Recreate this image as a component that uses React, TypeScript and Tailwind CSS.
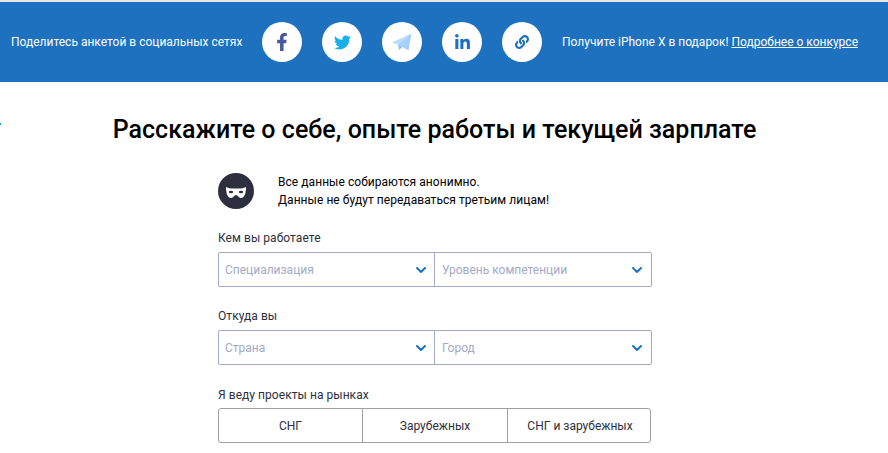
import { FaFacebookF, FaTwitter, FaLinkedinIn, FaLink } from 'react-icons/fa'
import { ChevronDown } from 'lucide-react'

function SocialCircle({ children }: { children: React.ReactNode }) {
    return (
        <a className="flex h-10 w-10 shrink-0 items-center justify-center rounded-full bg-white">
            {children}
        </a>
    )
}

function TelegramIcon() {
    return (
        <svg width="20" height="18" viewBox="0 0 20 18">
            <path d="M0 9.5 19.5 0.5 6 11.5Z" fill="#bcdcfb" />
            <path d="M6 11.5 19.5 0.5 16.5 17.5Z" fill="#a5d0fa" />
            <path d="M6 11.5 7 17 10.5 14Z" fill="#8fc2f5" />
        </svg>
    )
}

function MaskIcon() {
    return (
        <svg width="36" height="36" viewBox="0 0 36 36" className="shrink-0">
            <circle cx="18" cy="18" r="18" fill="#2d2f3e" />
            <path
                d="M8 14C12 16 14.5 15.5 18 15.5S24 16 28 14C28 19 27 25 23 25C20.5 25 20 22 18 22S15.5 25 13 25C9 25 8 19 8 14Z"
                fill="#fff"
            />
            <ellipse cx="13" cy="19" rx="2.2" ry="1.2" fill="#2d2f3e" />
            <ellipse cx="23" cy="19" rx="2.2" ry="1.2" fill="#2d2f3e" />
        </svg>
    )
}

function SelectBox({ placeholder, className }: { placeholder: string; className: string }) {
    return (
        <div className={`flex h-[35px] items-center justify-between border border-[#a3aac6] ${className}`}>
            <span className="text-[12px] text-[#a3aac6]">{placeholder}</span>
            <ChevronDown size={16} strokeWidth={3} className="text-[#1d71bf]" />
        </div>
    )
}

function SelectRow({ label, left, right }: { label: string; left: string; right: string }) {
    return (
        <div>
            <div className="mb-[6px] text-[12px] leading-[16px] tracking-[0.05px] text-[#2d2f3e]">{label}</div>
            <div className="flex">
                <SelectBox placeholder={left} className="w-[217px] rounded-l-[2px] pl-[6px] pr-[5px]" />
                <SelectBox placeholder={right} className="-ml-px w-[218px] rounded-r-[2px] pl-[7px] pr-[6px]" />
            </div>
        </div>
    )
}

export default function App() {
    return (
        <div className="relative h-[453px] w-[888px] overflow-hidden bg-white font-['Roboto',sans-serif]">
            <div className="h-[2px] bg-[#e4e7ea]" />
            <div className="flex h-[80px] items-center bg-[#1d71bf] pl-[11px] text-white">
                <span className="w-[251px] text-[12px]">Поделитесь анкетой в социальных сетях</span>
                <div className="flex gap-5">
                    <SocialCircle><FaFacebookF size={18} className="text-[#46599b]" /></SocialCircle>
                    <SocialCircle><FaTwitter size={17} className="text-[#18afe8]" /></SocialCircle>
                    <SocialCircle><TelegramIcon /></SocialCircle>
                    <SocialCircle><FaLinkedinIn size={17} className="text-[#1d71bf]" /></SocialCircle>
                    <SocialCircle><FaLink size={14} className="text-[#1d71bf]" /></SocialCircle>
                </div>
                <span className="ml-5 whitespace-nowrap text-[12px]">
                    Получите iPhone X в подарок! <span className="underline">Подробнее о конкурсе</span>
                </span>
            </div>

            <div className="absolute left-0 top-[123px] h-[2px] w-px bg-[#1d9be8]" />

            <h1 className="mt-[31px] pr-[19px] text-center text-[25px] leading-[34px] font-medium tracking-[0.02px] text-black">
                Расскажите о себе, опыте работы и текущей зарплате
            </h1>

            <div className="ml-[218px] mt-[26px] w-[434px]">
                <div className="flex items-center gap-[24px]">
                    <MaskIcon />
                    <p className="text-[12px] leading-[18px] tracking-[0.05px] text-black">
                        Все данные собираются анонимно.
                        <br />
                        Данные не будут передаваться третьим лицам!
                    </p>
                </div>

                <div className="mt-[21px] flex flex-col gap-[21px]">
                    <SelectRow label="Кем вы работаете" left="Специализация" right="Уровень компетенции" />
                    <SelectRow label="Откуда вы" left="Страна" right="Город" />
                    <div>
                        <div className="mb-[5px] mt-px text-[12px] leading-[16px] tracking-[0.05px] text-[#2d2f3e]">Я веду проекты на рынках</div>
                        <div className="flex h-[35px] w-[433px] rounded-[3px] border border-[#a0a0a0] text-[12px] text-[#2d2f3e]">
                            <div className="flex w-[144px] items-center justify-center border-r border-[#a0a0a0]">СНГ</div>
                            <div className="flex w-[145px] items-center justify-center border-r border-[#a0a0a0]">Зарубежных</div>
                            <div className="flex flex-1 items-center justify-center pl-[2px]">СНГ и зарубежных</div>
                        </div>
                    </div>
                </div>
            </div>
        </div>
    )
}
